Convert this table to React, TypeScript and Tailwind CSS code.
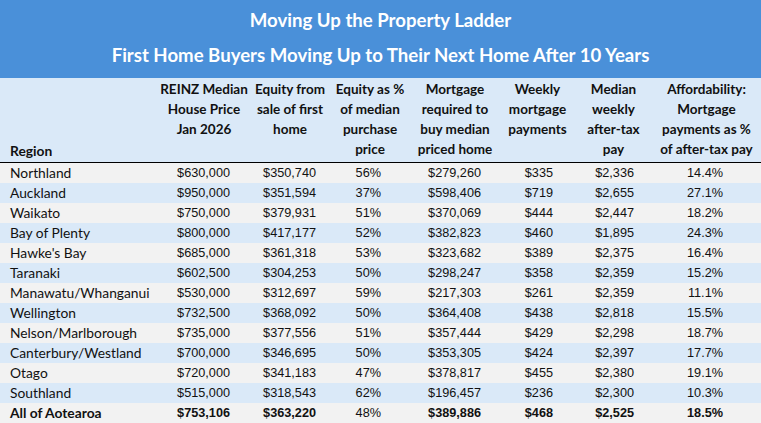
const rows: string[][] = [
  ["Northland", "$630,000", "$350,740", "56%", "$279,260", "$335", "$2,336", "14.4%"],
  ["Auckland", "$950,000", "$351,594", "37%", "$598,406", "$719", "$2,655", "27.1%"],
  ["Waikato", "$750,000", "$379,931", "51%", "$370,069", "$444", "$2,447", "18.2%"],
  ["Bay of Plenty", "$800,000", "$417,177", "52%", "$382,823", "$460", "$1,895", "24.3%"],
  ["Hawke's Bay", "$685,000", "$361,318", "53%", "$323,682", "$389", "$2,375", "16.4%"],
  ["Taranaki", "$602,500", "$304,253", "50%", "$298,247", "$358", "$2,359", "15.2%"],
  ["Manawatu/Whanganui", "$530,000", "$312,697", "59%", "$217,303", "$261", "$2,359", "11.1%"],
  ["Wellington", "$732,500", "$368,092", "50%", "$364,408", "$438", "$2,818", "15.5%"],
  ["Nelson/Marlborough", "$735,000", "$377,556", "51%", "$357,444", "$429", "$2,298", "18.7%"],
  ["Canterbury/Westland", "$700,000", "$346,695", "50%", "$353,305", "$424", "$2,397", "17.7%"],
  ["Otago", "$720,000", "$341,183", "47%", "$378,817", "$455", "$2,380", "19.1%"],
  ["Southland", "$515,000", "$318,543", "62%", "$196,457", "$236", "$2,300", "10.3%"],
];

const total = ["All of Aotearoa", "$753,106", "$363,220", "48%", "$389,886", "$468", "$2,525", "18.5%"];

const headers = [
  ["REINZ Median", "House Price", "Jan 2026"],
  ["Equity from", "sale of first", "home"],
  ["Equity as %", "of median", "purchase", "price"],
  ["Mortgage", "required to", "buy median", "priced home"],
  ["Weekly", "mortgage", "payments"],
  ["Median", "weekly", "after-tax", "pay"],
  ["Affordability:", "Mortgage", "payments as %", "of after-tax pay"],
];

const grid = "grid grid-cols-[158px_92px_80px_80px_90px_75px_77px_109px]";
const numPad = ["pr-[20px]", "pr-[14px]", "pr-[29px]", "pr-[19px]", "pr-[22px]", "pr-[18px]", "pr-[38px]"];

function Row({ cells, shade, bold }: { cells: string[]; shade: boolean; bold?: boolean }) {
  return (
    <div className={`${grid} h-[20px] items-center ${shade ? "bg-[#dae9f8]" : "bg-[#f2f2f2]"}`}>
      <div className={`pl-[10px] whitespace-nowrap text-[13.8px] font-['Lato',sans-serif] ${bold ? "font-bold" : ""}`}>
        {cells[0]}
      </div>
      {cells.slice(1).map((c, i) => (
        <div
          key={i}
          className={`text-right text-[12.7px] font-['Liberation_Sans',Arial,sans-serif] ${numPad[i]} ${
            bold && i !== 2 ? "font-bold" : ""
          }`}
        >
          {c}
        </div>
      ))}
    </div>
  );
}

export default function App() {
  return (
    <div className="w-[761px] h-[423px] overflow-hidden bg-white text-[#111] font-['Lato',sans-serif]">
      <div className="h-[78px] bg-[#4a90d9] text-white font-bold text-[18.6px] flex flex-col items-center pt-[3px]">
        <div className="h-[35px] leading-[35px]">Moving Up the Property Ladder</div>
        <div className="h-[35px] leading-[35px]">First Home Buyers Moving Up to Their Next Home After 10 Years</div>
      </div>
      <div className={`${grid} h-[85px] bg-[#dae9f8] border-b border-black font-bold text-[13.5px] leading-[20px]`}>
        <div className="flex items-end pl-[10px] pb-[1px] text-[13.8px]">Region</div>
        {headers.map((h, i) => (
          <div key={i} className="pt-[1px] text-center">
            {h.map((l) => (
              <div key={l} className="whitespace-nowrap">
                {l}
              </div>
            ))}
          </div>
        ))}
      </div>
      {rows.map((r, i) => (
        <Row key={r[0]} cells={r} shade={i % 2 === 1} />
      ))}
      <Row cells={total} shade={false} bold />
    </div>
  );
}
